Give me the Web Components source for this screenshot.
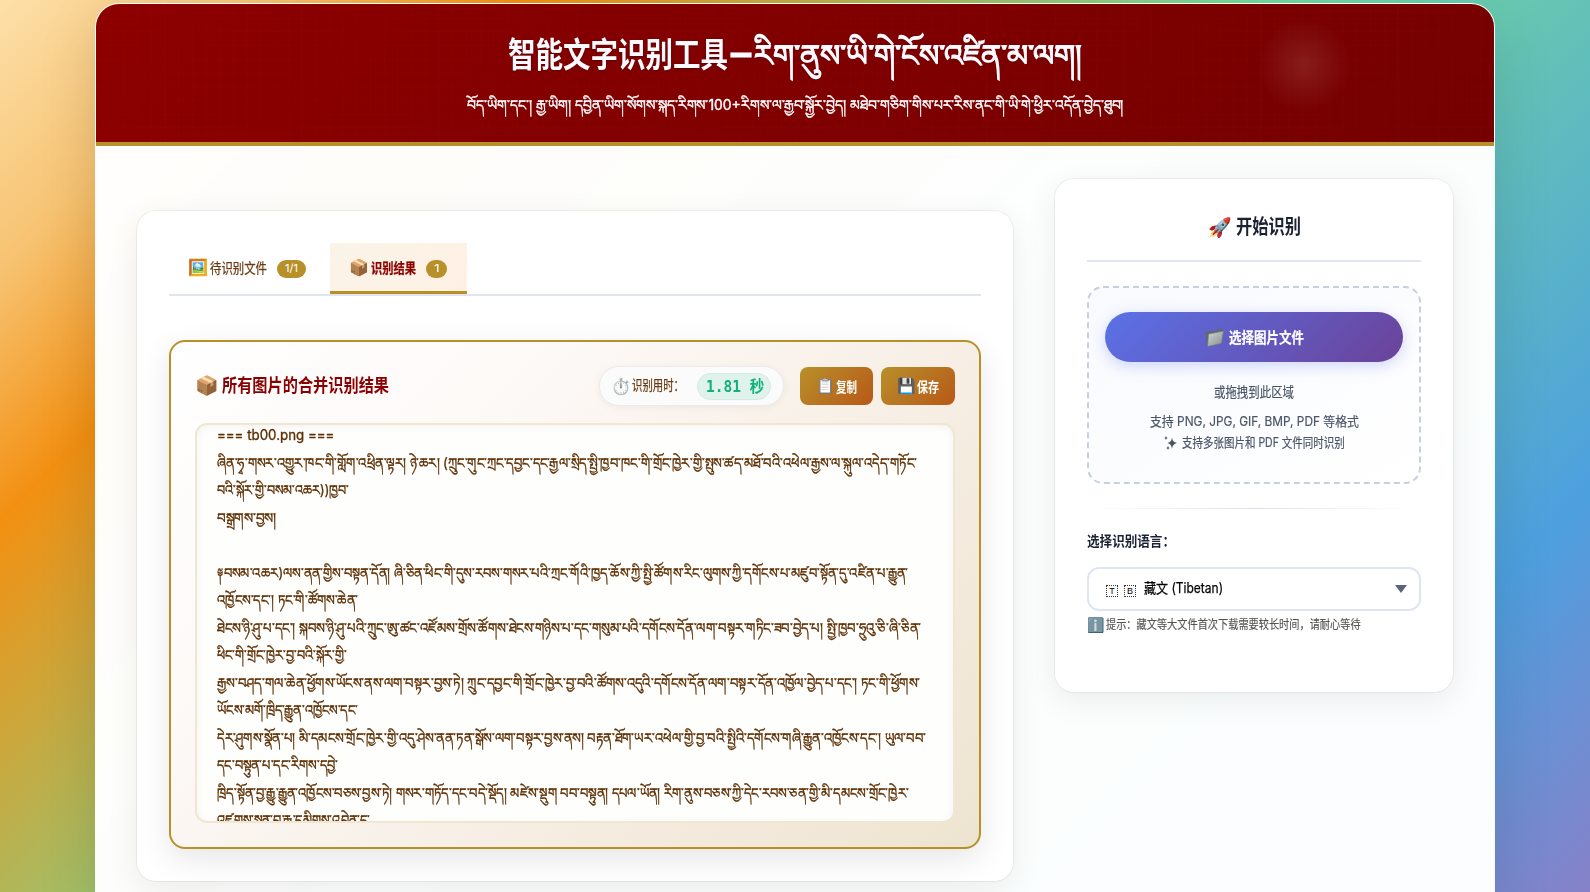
<!DOCTYPE html>
<html lang="zh">
<head>
<meta charset="utf-8">
<title>智能文字识别工具</title>
<style>
html,body{margin:0;padding:0;overflow:hidden}
body{font-family:"Inter","Noto Sans CJK SC",sans-serif;height:892px;
background:linear-gradient(135deg,#fde0a9 0,#f7c372 190px,#f39012 368px,#73da9a 884px,#4da0df 1471px,#8980c8 1765px)}
</style>
</head>
<body>
<ocr-app>
  <page-header slot="header"></page-header>
  <result-area slot="main"></result-area>
  <side-panel slot="side"></side-panel>
</ocr-app>
<script>
function define(name, html, extra) {
  const t = document.createElement('template');
  t.innerHTML = html;
  customElements.define(name, class extends HTMLElement {
    constructor() {
      super();
      this.attachShadow({mode: 'open'}).appendChild(t.content.cloneNode(true));
    }
    connectedCallback() { if (extra) extra(this); }
  });
}

define('ocr-app', `<style>
:host{display:block;box-sizing:border-box;height:892px;padding-top:3px}
.box{box-sizing:border-box;height:889px;border:1px solid rgba(255,255,255,.95);border-bottom:0;border-radius:24px 24px 0 0;overflow:hidden;background:rgba(255,255,255,.98);background-clip:padding-box}
.shade{border-radius:24px 24px 0 0;box-shadow:0 20px 60px rgba(0,0,0,.13);width:1400px;margin:0 auto}
.cols{display:grid;grid-template-columns:878px 400px;gap:40px;padding:32px 40px 0;align-items:start}
.main{margin-top:32px}
</style>
<div class="shade"><div class="box"><slot name="header"></slot><div class="cols"><div class="main"><slot name="main"></slot></div><slot name="side"></slot></div></div></div>`);

define('page-header', `<style>
:host{display:block;position:relative;height:138px;border-bottom:4px solid #b8902a;color:#fbfaff;
background:repeating-linear-gradient(90deg,rgba(255,255,255,.006) 0 1px,transparent 1px 13.7px),repeating-linear-gradient(0deg,rgba(255,255,255,.006) 0 1px,transparent 1px 13.7px),linear-gradient(135deg,#8d0000 0,#800000 50%,#750000 100%)}
.glow{position:absolute;left:1158px;top:11px;width:100px;height:100px;border-radius:50%;background:radial-gradient(circle,rgba(255,255,255,.11),transparent 47px)}
h1{margin:0;padding-top:25px;height:52px;display:flex;justify-content:center;gap:3px;font-size:34px;line-height:52px;font-weight:700;text-shadow:0 1px 3px rgba(0,0,0,.3)}
.bo{font-size:30px;line-height:52px;-webkit-text-stroke:1.2px #fbfaff;font-weight:400}
.dash{line-height:48px;-webkit-text-stroke:1px #fbfaff}
p{margin:0;display:flex;justify-content:center;font-size:14px;line-height:24px;padding-top:12px;-webkit-text-stroke:.4px #fff}
</style><div class="glow"></div>
<h1><fit-text w="220">智能文字识别工具</fit-text><fit-text class="dash" w="20">–</fit-text><fit-text class="bo" w="328">རིག་ནུས་ཡི་གེ་ངོས་འཛིན་མ་ལག།</fit-text></h1>
<p><fit-text w="656">བོད་ཡིག་དང་། རྒྱ་ཡིག། དབྱིན་ཡིག་སོགས་སྐད་རིགས་100+རིགས་ལ་རྒྱབ་སྐྱོར་བྱེད། མཐེབ་གཅིག་གིས་པར་རིས་ནང་གི་ཡི་གེ་ཕྱིར་འདོན་བྱེད་ཐུབ།</fit-text></p>`);

define('glass-card', `<style>
:host{display:block;box-sizing:border-box;border:1px solid rgba(0,0,0,.05);border-radius:20px;background:#fff;background-clip:padding-box;padding:32px;box-shadow:0 8px 32px rgba(0,0,0,.07)}
</style><slot></slot>`);

define('tab-item', `<style>
:host{display:flex;box-sizing:border-box;height:51px;padding:0 20px 0 19px;align-items:center;color:#6b3a10;font-size:14px;border-bottom:3px solid transparent;-webkit-text-stroke:.25px}
:host([active]){color:#8b0000;font-weight:700;border-color:#b8902a;background:linear-gradient(135deg,#faf4e8,#fff0e4)}
.ico{font-size:16px;width:22px;line-height:20px;white-space:nowrap;font-weight:400}
.badge{margin-left:10px;height:18px;border-radius:9px;background:#b8902a;color:#fff;font-size:11px;line-height:17px;font-weight:400;margin-top:3px;padding:0 8px;-webkit-text-stroke:0}
</style><span class="ico"><slot name="icon"></slot></span><slot></slot><span class="badge"><slot name="count"></slot></span>`);

define('action-button', `<style>
:host{display:flex;box-sizing:border-box;height:38px;border-radius:8px;align-items:center;padding-left:16px;color:#fff;font-size:14px;font-weight:700;background:linear-gradient(135deg,#b8902a,#b85818)}
.i{font-size:15px;width:20px;line-height:18px;white-space:nowrap;font-weight:400}
:host([muted]) .i{filter:grayscale(1)}
</style><span class="i"><slot name="icon"></slot></span><slot></slot>`);

define('time-badge', `<style>
:host{display:flex;box-sizing:border-box;width:185px;height:40px;border-radius:20px;border:1px solid #ebebee;background:#fcfbfb;box-shadow:0 2px 8px rgba(0,0,0,.05);align-items:center;padding-left:11px;color:#6b3a10;font-size:14px}
.i{font-size:16px;width:21px;line-height:20px;white-space:nowrap}
.n{line-height:18px;margin-bottom:2px;-webkit-text-stroke:.25px}
.v{margin-left:13px;box-sizing:border-box;width:74px;height:27px;border-radius:14px;background:#e0f2ec;border:1px solid #d3e9e2;color:#12b07c;font:600 16px/25px "DejaVu Sans Mono","Noto Sans CJK SC",monospace;padding-left:8px}
</style><span class="i">⏱️</span><fit-text class="n" w="52">识别用时：</fit-text><span class="v"><fit-text w="58">1.81 秒</fit-text></span>`);

define('result-text', `<style>
:host{display:block;box-sizing:border-box;height:400px;border:2px solid #f0e6d2;border-radius:12px;overflow:hidden;background:#fefefd;box-shadow:inset 0 2px 8px rgba(0,0,0,.05);padding:0 20px;color:#5c2e00;font-size:14px}
.ls{margin-top:-4px;-webkit-text-stroke:.35px #5c2e00}
.l{height:27.5px;line-height:27.5px}
</style><div class="ls"></div>`, host => {
  const lines = [
    [117, '=== tb00.png ==='],
    [700, 'ཞིན་ཧྭ་གསར་འགྱུར་ཁང་གི་གློག་འཕྲིན་ལྟར། ཉེ་ཆར། (ཀྲུང་གུང་ཀྲང་དབྱང་དང་རྒྱལ་སྲིད་སྤྱི་ཁྱབ་ཁང་གི་གྲོང་ཁྱེར་གྱི་སྤུས་ཚད་མཐོ་བའི་འཕེལ་རྒྱས་ལ་སྐུལ་འདེད་གཏོང་'],
    [132, 'བའི་སྐོར་གྱི་བསམ་འཆར))ཁྱབ་'],
    [59, 'བསྒྲགས་བྱས།'],
    [0, ''],
    [691, '༈བསམ་འཆར)ལས་ནན་གྱིས་བསྟན་དོན། ཞི་ཅིན་ཕིང་གི་དུས་རབས་གསར་པའི་ཀྲང་གོའི་ཁྱད་ཆོས་ཀྱི་སྤྱི་ཚོགས་རིང་ལུགས་ཀྱི་དགོངས་པ་མཛུབ་སྟོན་དུ་འཛིན་པ་རྒྱུན་'],
    [141, 'འཁྱོངས་དང་། ཏང་གི་ཚོགས་ཆེན་'],
    [704, 'ཐེངས་ཉི་ཤུ་པ་དང་། སྐབས་ཉི་ཤུ་པའི་ཀྲུང་ཨུ་ཚང་འཛོམས་གྲོས་ཚོགས་ཐེངས་གཉིས་པ་དང་གསུམ་པའི་དགོངས་དོན་ལག་བསྟར་གཏིང་ཟབ་བྱེད་པ། སྤྱི་ཁྱབ་ཧྲུའུ་ཅི་ཞི་ཅིན་'],
    [130, 'ཕིང་གི་གྲོང་ཁྱེར་བྱ་བའི་སྐོར་གྱི་'],
    [703, 'རྒྱས་བཤད་གལ་ཆེན་ཕྱོགས་ཡོངས་ནས་ལག་བསྟར་བྱས་ཏེ། ཀྲུང་དབྱང་གི་གྲོང་ཁྱེར་བྱ་བའི་ཚོགས་འདུའི་དགོངས་དོན་ལག་བསྟར་དོན་འཁྱོལ་བྱེད་པ་དང་། ཏང་གི་ཕྱོགས་'],
    [141, 'ཡོངས་མགོ་ཁྲིད་རྒྱུན་འཁྱོངས་དང་'],
    [709, 'དེར་ཤུགས་སྣོན་པ། མི་དམངས་གྲོང་ཁྱེར་གྱི་འདུ་ཤེས་ནན་ཏན་སྒོས་ལག་བསྟར་བྱས་ནས། བརྟན་ཐོག་ཡར་འཕེལ་གྱི་བྱ་བའི་སྤྱིའི་དགོངས་གཞི་རྒྱུན་འཁྱོངས་དང་། ཡུལ་བབ་'],
    [121, 'དང་བསྟུན་པ་དང་རིགས་དབྱེ་'],
    [692, 'ཁྲིད་སྟོན་བྱ་རྒྱུ་རྒྱུན་འཁྱོངས་བཅས་བྱས་ཏེ། གསར་གཏོད་དང་བདེ་སྡོད། མཛེས་སྡུག བབ་བསྟུན། དཔལ་ཡོན། རིག་ནུས་བཅས་ཀྱི་དེང་རབས་ཅན་གྱི་མི་དམངས་གྲོང་ཁྱེར་'],
    [153, 'འཛུགས་སྐྲུན་བྱ་རྒྱུ་དམིགས་འབེན་དུ་']
  ];
  host.shadowRoot.querySelector('.ls').innerHTML =
    lines.map(([w, s]) => `<div class="l">${s ? `<fit-text w="${w}">${s}</fit-text>` : ''}</div>`).join('');
});

define('result-area', `<style>
:host{display:block}
.tabs{display:flex;gap:4px;height:51px;border-bottom:2px solid #e0e5f0}
.panel{box-sizing:border-box;height:509px;margin-top:44px;border:2px solid #b8902a;border-radius:16px;padding:24px;background:linear-gradient(135deg,#fff 0,#fdf9f7 30%,#f5ece0 70%,#ede4d0 100%);box-shadow:0 10px 30px rgba(0,0,0,.1)}
.head{display:flex;align-items:center;height:40px;margin-bottom:17px}
h3{margin:0;display:flex;align-items:center;flex:1;font-size:18px;color:#8b0000;line-height:26px}
.i{font-size:19px;width:27px;line-height:26px;font-weight:400;white-space:nowrap}
.a{width:73px;margin-left:16px}.b{width:74px;margin-left:8px}
</style><glass-card>
<div class="tabs"><tab-item><span slot="icon">🖼️</span><fit-text w="57">待识别文件</fit-text><fit-text slot="count" w="13">1/1</fit-text></tab-item>
<tab-item active><span slot="icon">📦</span><fit-text w="45">识别结果</fit-text><fit-text slot="count" w="5">1</fit-text></tab-item></div>
<div class="panel"><div class="head"><h3><span class="i">📦</span><fit-text w="167">所有图片的合并识别结果</fit-text></h3>
<time-badge></time-badge>
<action-button class="a" muted><span slot="icon">📋</span><fit-text w="21">复制</fit-text></action-button>
<action-button class="b"><span slot="icon">💾</span><fit-text w="22">保存</fit-text></action-button></div>
<result-text></result-text></div></glass-card>`);

define('upload-box', `<style>
:host{display:block;height:198px;color:#4a5568;text-align:center;font-size:13px;line-height:21px;position:relative;-webkit-text-stroke:.2px}
svg.f{position:absolute;left:0;top:0}
.in{position:relative;padding:26px 18px 0}
.btn{height:50px;border-radius:25px;background:linear-gradient(135deg,#5a72e8 0,#6b4299 100%);box-shadow:0 4px 15px rgba(102,126,234,.3);display:flex;align-items:center;justify-content:center;color:#fff;font-size:15px;font-weight:700}
.btn svg{margin-right:5px}
.t{font-size:14px;margin-top:19px}
.u{margin-top:9px}
.s{display:flex;justify-content:center;align-items:center;gap:5px}
</style>
<svg class="f" width="334" height="198"><defs><linearGradient id="g" x1="0" y1="0" x2="1" y2="1"><stop stop-color="#f8fafe"/><stop offset="1" stop-color="#fff"/></linearGradient></defs><rect x="1" y="1" width="332" height="196" rx="15" fill="url(#g)" stroke="#c5d0e0" stroke-width="2" stroke-dasharray="6 4"/></svg>
<div class="in"><div class="btn"><svg width="19" height="20" viewBox="0 0 19 20"><defs><linearGradient id="m" x1="0" y1="0" x2="1" y2="1"><stop stop-color="#d3d8d8"/><stop offset="1" stop-color="#858c8e"/></linearGradient></defs><path d="M.5 5L7 3.500L8.500 4.500L17 1.200L18.500 4L16 16L2 19.500Z" fill="#5f686a"/><path d="M3.500 7L18.500 4L16.500 16.500L2.500 19.500Z" fill="url(#m)" stroke="#6f7779" stroke-width=".7"/></svg><fit-text w="75">选择图片文件</fit-text></div>
<div class="t"><fit-text w="80">或拖拽到此区域</fit-text></div>
<div class="u"><fit-text w="209">支持 PNG, JPG, GIF, BMP, PDF 等格式</fit-text></div>
<div class="s"><svg width="13" height="14" viewBox="0 0 13 14" fill="#4a5568"><path d="M8 1.500Q8.500 6 13 7Q8.500 8 8 13Q7.500 8 3.500 7Q7.500 6 8 1.500ZM2 0Q2.200 1.600 3.600 2Q2.200 2.400 2 4Q1.800 2.400.3 2Q1.800 1.600 2 0ZM4 10Q4.200 11.600 5.600 12Q4.200 12.400 4 14Q3.800 12.400 2.300 12Q3.800 11.600 4 10Z"/></svg><fit-text w="163">支持多张图片和 PDF 文件同时识别</fit-text></div></div>`);

define('lang-select', `<style>
:host{display:flex;box-sizing:border-box;height:44px;border:2px solid #dfe5f1;border-radius:12px;background:#fff;align-items:center;padding:0 12px 1px 17px;color:#000;font-size:14px}
.k{box-sizing:border-box;width:12px;height:12px;border:1px dotted #333;font:9px/10px "Liberation Sans",sans-serif;text-align:center;margin:5px 6px 0 0;color:#000}
fit-text{margin:0 0 3px 2px;-webkit-text-stroke:.25px #000}
svg{margin-left:auto}
</style><span class="k">T</span><span class="k">B</span><fit-text w="79">藏文 (Tibetan)</fit-text><svg width="12" height="8"><path d="M0 0h12L6 8z" fill="#5a6577"/></svg>`);

define('side-panel', `<style>
:host{display:block}
glass-card{height:515px}
h2{margin:0;height:49px;border-bottom:2px solid #e0e5f0;display:flex;justify-content:center;font-size:20px;line-height:33px;color:#1a2234}
.i{font-size:19px;width:28px;font-weight:400;white-space:nowrap}
upload-box{margin-top:24px}
hr{border:0;height:1px;margin:24px 0 21px;background:linear-gradient(90deg,transparent,#dbe3ea,transparent)}
.lab{font-size:14px;font-weight:700;line-height:22px;color:#1a2234;height:22px;margin-bottom:15px}
.hint{display:flex;font-size:12.500px;line-height:20px;color:#555;margin-top:4px;-webkit-text-stroke:.15px}
.hi{font-size:14px;width:19px;white-space:nowrap;filter:brightness(.85)}
</style><glass-card><h2><span class="i">🚀</span><fit-text w="65">开始识别</fit-text></h2>
<upload-box></upload-box><hr>
<div class="lab"><fit-text w="88">选择识别语言：</fit-text></div>
<lang-select></lang-select>
<div class="hint"><span class="hi">ℹ️</span><fit-text w="255">提示：藏文等大文件首次下载需要较长时间，请耐心等待</fit-text></div></glass-card>`);

/* Single-line text that is condensed or widened to the width in its "w" attribute. */
define('fit-text', `<style>
:host{display:inline-block;white-space:nowrap;text-align:left;vertical-align:top}
span{display:inline-block;transform-origin:0 50%;white-space:nowrap}
</style><span><slot></slot></span>`, host => {
  const s = host.shadowRoot.querySelector('span'), w = +host.getAttribute('w');
  const n = s.offsetWidth;
  host.style.width = w + 'px';
  if (n) s.style.transform = `scaleX(${w / n})`;
});
</script>
</body>
</html>
